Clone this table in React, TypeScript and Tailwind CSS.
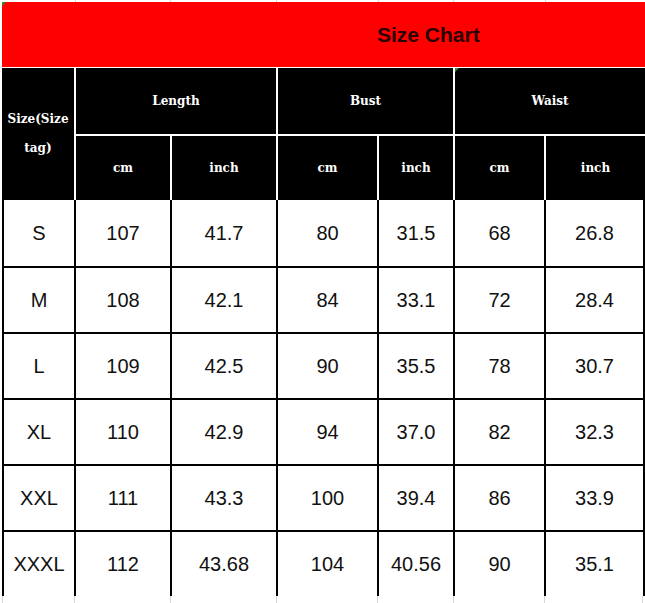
import React from "react";

const rows = [
  ["S", "107", "41.7", "80", "31.5", "68", "26.8"],
  ["M", "108", "42.1", "84", "33.1", "72", "28.4"],
  ["L", "109", "42.5", "90", "35.5", "78", "30.7"],
  ["XL", "110", "42.9", "94", "37.0", "82", "32.3"],
  ["XXL", "111", "43.3", "100", "39.4", "86", "33.9"],
  ["XXXL", "112", "43.68", "104", "40.56", "90", "35.1"],
];

const widths = ["w-[72px]", "w-[96px]", "w-[106px]", "w-[101px]", "w-[76px]", "w-[91px]", "w-[101px] border-r-2"];

const serif = { fontFamily: '"DejaVu Serif", "Liberation Serif", serif' };

function H({ className, children }: { className: string; children: React.ReactNode }) {
  return (
    <div className={`bg-black text-white font-bold text-[12px] flex items-center justify-center ${className}`} style={serif}>
      {children}
    </div>
  );
}

export default function App() {
  return (
    <div className="w-[645px] h-[603px] bg-white overflow-hidden relative" style={{ fontFamily: '"Liberation Sans", Arial, sans-serif' }}>
      {/* top gridline strip */}
      <div className="flex h-[2px]">
        <div className="w-[76px] border-r border-[#d6d6d6]" />
        <div className="w-[95px] border-r border-[#d6d6d6]" />
        <div className="w-[106px] border-r border-[#d6d6d6]" />
        <div className="w-[102px] border-r border-[#d6d6d6]" />
        <div className="w-[75px] border-r border-[#d6d6d6]" />
        <div className="w-[92px] border-r border-[#d6d6d6]" />
      </div>
      {/* red title band */}
      <div className="ml-[2px] h-[65px] bg-[#ff0000] flex items-center pl-[375px] relative">
        <span className="text-[21px] font-bold text-[#2a0202] leading-none">Size Chart</span>
        <svg className="absolute left-0 top-0" width="4" height="4"><polygon points="0,0 4,0 0,4" fill="#2e8b2e" /></svg>
      </div>
      <div className="ml-[2px] h-[1px] bg-white" />
      {/* header */}
      <div className="ml-[2px] h-[132px] bg-white flex gap-x-[2px] relative">
        <H className="w-[72px] h-full">
          <div className="text-center leading-[29px]">
            Size(Size
            <br />
            tag)
          </div>
        </H>
        <div className="w-[200px] flex flex-col gap-y-[2px]">
          <H className="h-[66px]">Length</H>
          <div className="flex gap-x-[2px] h-[64px]">
            <H className="w-[94px]">cm</H>
            <H className="w-[104px]">inch</H>
          </div>
        </div>
        <div className="w-[175px] flex flex-col gap-y-[2px]">
          <H className="h-[66px]">Bust</H>
          <div className="flex gap-x-[2px] h-[64px]">
            <H className="w-[99px]">cm</H>
            <H className="w-[74px]">inch</H>
          </div>
        </div>
        <div className="w-[190px] flex flex-col gap-y-[2px] relative">
          <H className="h-[66px]">Waist</H>
          <div className="flex gap-x-[2px] h-[64px]">
            <H className="w-[89px]">cm</H>
            <H className="w-[99px]">inch</H>
          </div>
          <svg className="absolute left-0 top-0" width="4" height="4"><polygon points="0,0 4,0 0,4" fill="#2e8b2e" /></svg>
        </div>
      </div>
      {/* body */}
      <div className="ml-[2px]">
        {rows.map((r, i) => (
          <div key={i} className={`flex ${i === 0 ? "h-[66px]" : "h-[66px] border-t-2 border-black"}`}>
            {r.map((c, j) => (
              <div
                key={j}
                className={`${widths[j]} border-l-2 border-black flex items-center justify-center text-[20px] text-[#111111]`}
              >
                {c}
              </div>
            ))}
          </div>
        ))}
      </div>
      {/* bottom gridline strip */}
      <div className="flex h-[7px] ml-[2px]">
        <div className="w-[72px] border-l border-[#d6d6d6]" />
        <div className="w-[96px] border-l border-[#d6d6d6]" />
        <div className="w-[106px] border-l border-[#d6d6d6]" />
        <div className="w-[101px] border-l border-[#d6d6d6]" />
        <div className="w-[76px] border-l border-[#d6d6d6]" />
        <div className="w-[91px] border-l border-[#d6d6d6]" />
        <div className="w-[99px] border-l border-r border-[#d6d6d6]" />
      </div>
    </div>
  );
}
